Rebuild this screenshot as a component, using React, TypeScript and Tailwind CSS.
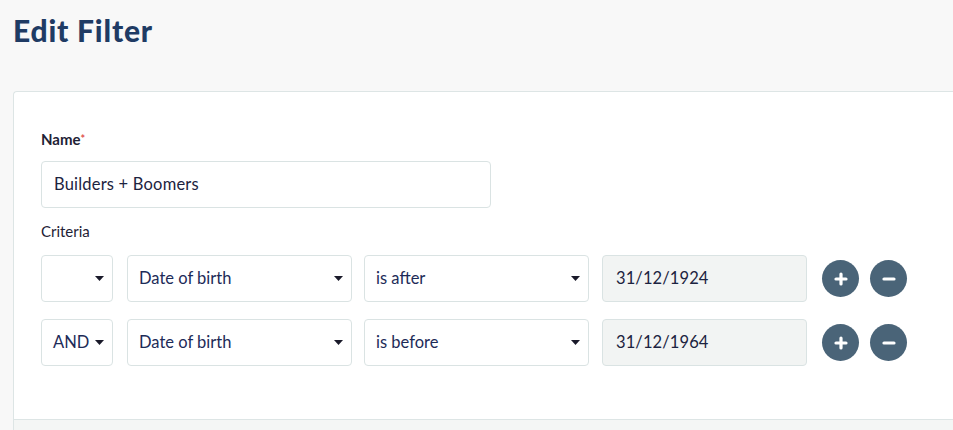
const font = { fontFamily: "Lato, 'Open Sans', sans-serif" };

function Caret() {
  return (
    <svg width="9" height="5" viewBox="0 0 9 5" className="shrink-0">
      <path d="M0 0h9L4.5 5z" fill="#1a1a2a" />
    </svg>
  );
}

function Select({ value, width }: { value: string; width: string }) {
  return (
    <div
      className={`${width} h-[47px] shrink-0 flex items-center justify-between gap-[4px] pl-[11px] pr-[8px] bg-white border border-[#dae3e3] rounded-[4px] text-[16.5px] text-[#1d2b58]`}
    >
      <span className="whitespace-nowrap">{value}</span>
      <Caret />
    </div>
  );
}

function RoundButton({ kind }: { kind: "plus" | "minus" }) {
  return (
    <button className="w-[37px] h-[37px] rounded-full bg-[#4a6478] flex items-center justify-center">
      <svg width="16" height="16" viewBox="0 0 16 16">
        <path d="M3 8h10" stroke="white" strokeWidth="3.2" strokeLinecap="round" />
        {kind === "plus" && (
          <path d="M8 3v10" stroke="white" strokeWidth="3.2" strokeLinecap="round" />
        )}
      </svg>
    </button>
  );
}

function CriteriaRow({ join, field, op, date }: { join: string; field: string; op: string; date: string }) {
  return (
    <div className="flex items-center">
      <Select value={join} width="w-[72px]" />
      <div className="w-[14px]" />
      <Select value={field} width="w-[225px]" />
      <div className="w-[12px]" />
      <Select value={op} width="w-[225px]" />
      <div className="w-[13px]" />
      <div className="w-[205px] h-[47px] flex items-center px-[13px] bg-[#f2f4f3] border border-[#dae3e3] rounded-[4px] text-[16.5px] tracking-[0.1px] text-[#1c2340]">
        {date}
      </div>
      <div className="ml-[15px] flex gap-[11px]">
        <RoundButton kind="plus" />
        <RoundButton kind="minus" />
      </div>
    </div>
  );
}

export default function App() {
  return (
    <div className="w-[953px] h-[430px] overflow-hidden bg-[#f8f8f8]" style={font}>
      <h1 className="pl-[13px] pt-[11px] text-[30px] font-black text-[#1f3b64] leading-[38px] tracking-[0.8px]">
        Edit Filter
      </h1>
      <div className="ml-[13px] mt-[42px] bg-white border-l border-t border-[#dde5e5] rounded-tl-[4px]">
        <div className="h-[327px] pl-[27px] pt-[37px]">
          <div className="text-[15px] font-bold text-[#1e2235] leading-[20px]">
            Name<span className="text-[#e0524f] text-[11px] align-top">*</span>
          </div>
          <div className="mt-[12px] w-[450px] h-[47px] flex items-center px-[12px] border border-[#dae3e3] rounded-[4px] text-[16.5px] tracking-[0.2px] text-[#1c2340]">
            Builders + Boomers
          </div>
          <div className="mt-[13px] text-[15px] text-[#1e2235] leading-[20px]">Criteria</div>
          <div className="mt-[14px] flex flex-col gap-[17px]">
            <CriteriaRow join="" field="Date of birth" op="is after" date="31/12/1924" />
            <CriteriaRow join="AND" field="Date of birth" op="is before" date="31/12/1964" />
          </div>
        </div>
        <div className="h-[20px] border-t border-[#dde5e5] bg-[#f4f6f5]" />
      </div>
    </div>
  );
}
